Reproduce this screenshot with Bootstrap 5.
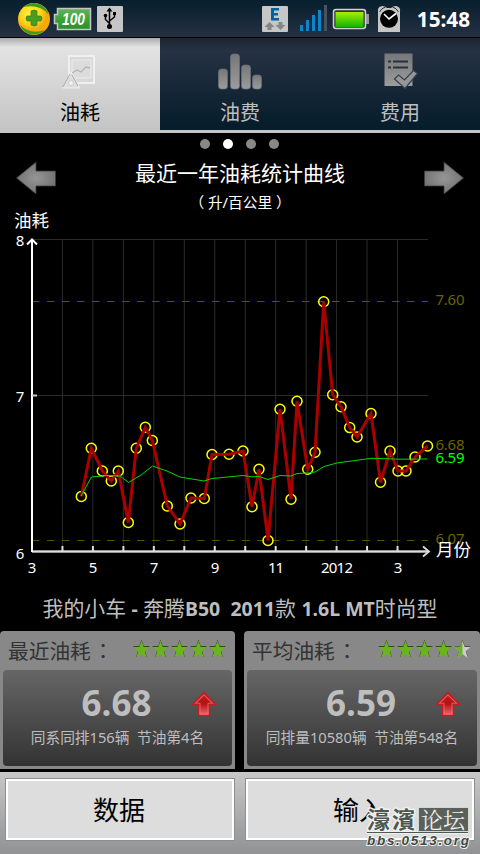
<!DOCTYPE html>
<html lang="zh-CN">
<head>
    <meta charset="UTF-8">
    <meta name="viewport" content="width=device-width, initial-scale=1.0">
    <title>油耗</title>
    <link href="https://cdn.jsdelivr.net/npm/bootstrap@5.3.0/dist/css/bootstrap.min.css" rel="stylesheet">
    <style>
        body {
            background: #000;
            color: #fff;
            font-family: "Noto Sans", "Noto Sans CJK SC", sans-serif;
            overflow: hidden;
        }
        svg { display: block; flex: none; }
        .app { width: 480px; height: 854px; }
        .status-bar {
            height: 38px;
            border-bottom: 1px solid #000;
            background: linear-gradient(#061f2e, #263042);
            padding: 0 10px 0 17px;
        }
        .clock { font-size: 20.7px; line-height: 38px; font-weight: 700; margin-left: 15px; padding-top: 1px; }
        .tabs {
            height: 95px;
            background: linear-gradient(#1d242f, #263144 12px, #051c2a 92px, #c4c4c4 92px);
        }
        .tab-item { color: #bebebe; font-size: 20px; line-height: 28px; padding-top: 14px; }
        .tab-item.active { color: #000; background: linear-gradient(#a9a9a9, #e3e3e3 9px, #c4c4c4 92px); }
        .tab-item svg { margin-bottom: 7px; }
        .dots { height: 22px; gap: 13px; padding-right: 2px; }
        .dot { width: 10px; height: 10px; border-radius: 50%; background: #888; }
        .dot.on { background: #fff; }
        .chart-head { height: 57px; padding: 0 15px; }
        .chart-title { font-size: 21px; line-height: 34px; }
        .chart-unit { font-size: 14.7px; line-height: 26px; }
        .car-name { height: 51px; padding-top: 3px; font-size: 20.9px; line-height: 50px; color: #bebebe; white-space: pre; }
        .car-name b { font-size: 19.5px; }
        .stats { height: 138px; gap: 9px; }
        .stat-box { background: #888; border-radius: 4px 4px 0 0; padding: 0 3px 3px; }
        .stat-head { height: 39px; padding: 0 4px 0 5px; color: #333; font-size: 20.7px; line-height: 38px; }
        .colon { font-family: "Noto Sans CJK TC", sans-serif; margin-left: 2px; }
        .stat-body {
            height: 96px;
            border-radius: 4px;
            background: linear-gradient(#666, #333);
            color: #bebebe;
            padding-top: 9px;
        }
        .stat-value { font-size: 35px; line-height: 48px; font-weight: 700; padding-right: 2px; }
        .stat-note { font-size: 14.7px; line-height: 21px; white-space: pre; }
        .trend { right: 15px; top: 21px; }
        .stat-box + .stat-box .trend { right: 16px; }
        .actions {
            height: 82px;
            margin-top: 3px;
            padding: 6px 5px 0;
            gap: 10px;
            background: linear-gradient(#c8c8c8, #909294);
        }
        .action-btn {
            height: 63px;
            border: 1px solid #8e8e8e;
            border-radius: 0;
            box-shadow: inset 0 0 0 2px #fff;
            background: #ddd;
            color: #000;
            font-size: 26px;
            line-height: 61px;
            padding: 1px 2px 0 0;
        }
        .forum-mark { right: 6px; bottom: 1px; }
        .cjk { font-family: "Noto Sans CJK SC", sans-serif; }
    </style>
</head>
<body>
<div class="app d-flex flex-column">
    <!-- 状态栏 -->
    <div class="status-bar d-flex align-items-center">
        <svg width="110" height="38" viewBox="17 0 110 38">
            <defs>
                <radialGradient id="ball" cx=".4" cy=".35"><stop offset="0" stop-color="#fff34a"/><stop offset=".6" stop-color="#ffd91a"/><stop offset="1" stop-color="#f5a90b"/></radialGradient>
                <linearGradient id="cell" x2="0" y2="1"><stop offset="0" stop-color="#62b45f"/><stop offset=".5" stop-color="#3ca33c"/><stop offset="1" stop-color="#239323"/></linearGradient>
            </defs>
            <circle cx="34" cy="19" r="16" fill="url(#ball)"/>
            <path d="M23 7Q34-1 44 7Q49 12 48 14Q40 4 23 7ZM20 25Q30 35 45 30Q38 36 29 34Q22 31 20 25Z" fill="#3f9a23"/>
            <path d="M31 11q3-2 6 0v5h4q2 2 0 5h-4v4q-3 2-6 0v-4h-4q-2-3 0-5h4z" fill="#4a9d1e" stroke="#2f7d1c" stroke-width=".7"/>
            <path d="M57.500 8.500h33v21h-33v-6h-3v-9h3z" fill="url(#cell)" stroke="#c6c6c6" stroke-width="1.500"/>
            <text x="62" y="25" font-family="Liberation Sans" font-size="17" font-style="italic" font-weight="700" fill="#fff" textLength="23" lengthAdjust="spacingAndGlyphs">100</text>
            <rect x="97" y="6" width="26" height="26" rx="1" fill="#c6c6c6"/>
            <g fill="none" stroke="#000" stroke-width="1.500"><path d="M109.500 26V9M109.500 23.500L105.500 19.500V16M109.500 21L114.500 17V14"/></g>
            <path d="M109.500 7.500l3 4h-6z"/><circle cx="109.500" cy="26.500" r="2.500"/><circle cx="105.500" cy="15.500" r="1.800"/><path d="M113 12h3v3h-3z"/>
        </svg>
        <svg class="ms-auto" width="142" height="38" viewBox="260 0 142 38">
            <defs><linearGradient id="juice" x2="0" y2="1"><stop offset="0" stop-color="#a4f000"/><stop offset="1" stop-color="#12b400"/></linearGradient></defs>
            <rect x="262" y="6" width="26" height="26" rx="1" fill="#c6c6c6"/>
            <path d="M271 8h8v2.500h-5V13h4v2.500h-4V18h5v2.500h-8z" fill="#00629f"/>
            <path d="M269.500 22l5 5h-3v3h-4v-3h-3zM280.500 30l5-5h-3v-3h-4v3h-3z" fill="#858585"/>
            <path d="M300 25h3v6h-3zM306 20h3v11h-3zM312 15h3v16h-3zM318 10h3v21h-3z" fill="#0a86cc"/>
            <path d="M324 5h3v26h-3z" fill="#4a525e"/>
            <rect x="366" y="14" width="3" height="10" fill="#969696"/>
            <rect x="333.500" y="9.500" width="32" height="19" rx="2.500" fill="#333" stroke="#d0d0d0" stroke-width="1.500"/>
            <rect x="335.500" y="12" width="28" height="15" fill="url(#juice)"/>
            <path d="M378 12q-1-5 4-6q3 0 5 2h4q2-2 5-2q5 1 4 6v20h-22z" fill="#c6c6c6"/>
            <path d="M379.500 12q2-4 6-5M398.500 12q-2-4-6-5" fill="none" stroke="#333" stroke-width="1"/>
            <circle cx="389" cy="18.800" r="9" fill="#000"/>
            <path d="M384 14l5 5 7-5.500" fill="none" stroke="#fff" stroke-width="1.600"/>
        </svg>
        <span class="clock">15:48</span>
    </div>

    <!-- 标签页 -->
    <div class="tabs d-flex">
        <div class="tab-item active col-4 d-flex flex-column align-items-center">
            <svg width="36" height="40" viewBox="62 52 36 40">
                <rect x="69" y="56" width="25" height="27" fill="#d8d8d8" stroke="#f0f0f0" stroke-width="2"/>
                <path d="M72 60h19v18H72z" fill="#dcdcdc" stroke="#ececec"/>
                <path d="M72 73l5-3 4 2 5-5 4 1" fill="none" stroke="#b5b5b5" stroke-width="1.300"/>
                <path d="M71 72l-8 16h17z" fill="#dedede" stroke="#eee"/>
                <path d="M70 74l-7 13M72 75l6 11" stroke="#aaa" fill="none"/>
                <circle cx="71" cy="83" r="2.500" fill="#f1f1f1" stroke="#bbb" stroke-width=".6"/>
            </svg>
            <span>油耗</span>
        </div>
        <div class="tab-item col-4 d-flex flex-column align-items-center">
            <svg width="48" height="40" viewBox="216 52 48 40">
                <defs><linearGradient id="metal" x2="0" y2="1"><stop offset="0" stop-color="#777"/><stop offset="1" stop-color="#9c9c9c"/></linearGradient></defs>
                <g fill="url(#metal)" stroke="#6e747b" stroke-width=".6"><rect x="218.500" y="69" width="9" height="20" rx="3"/><rect x="230.500" y="54" width="9" height="35" rx="3"/><rect x="241.500" y="65" width="9" height="24" rx="3"/><rect x="252.500" y="75" width="9" height="14" rx="3"/></g>
            </svg>
            <span>油费</span>
        </div>
        <div class="tab-item col-4 d-flex flex-column align-items-center">
            <svg width="38" height="40" viewBox="381 52 38 40">
                <path d="M384.500 53.500h28V86h-28z" fill="url(#metal)"/>
                <path d="M388 61.500h3M393 61.500h15M388 67.500h3M393 67.500h15" stroke="#27313f" stroke-width="1.800"/>
                <path d="M394.500 79l4-4 6 5 9-9.500 4 3-12.500 15z" fill="#969696" stroke="#34404d" stroke-width="1.200"/>
            </svg>
            <span>费用</span>
        </div>
    </div>

    <!-- 曲线标题 -->
    <div class="dots d-flex justify-content-center align-items-center">
        <span class="dot"></span><span class="dot on"></span><span class="dot"></span><span class="dot"></span>
    </div>
    <div class="chart-head d-flex justify-content-between">
        <svg width="42" height="46" viewBox="0 0 42 46">
            <defs><radialGradient id="arrow"><stop offset="0" stop-color="#969696"/><stop offset="1" stop-color="#747474"/></radialGradient></defs>
            <path d="M1.500 23L21 7v9h19.500v15H21v8z" fill="url(#arrow)" stroke="#3a3a3a" stroke-width=".8"/>
        </svg>
        <div class="text-center">
            <div class="chart-title cjk">最近一年油耗统计曲线</div>
            <div class="chart-unit">（ 升/百公里 ）</div>
        </div>
        <svg width="42" height="46" viewBox="0 0 42 46"><path d="M40.500 23L21 7v9H1.500v15H21v8z" fill="url(#arrow)" stroke="#3a3a3a" stroke-width=".8"/></svg>
    </div>

    <!-- 油耗曲线 -->
    <svg id="chart" class="overflow-visible" width="480" height="368" viewBox="0 212 480 368" font-size="15" fill="#fff">
        <text x="14" y="227" font-size="17.500">油耗</text>
        <g id="grid" stroke="#2b2b2b" stroke-width="1" fill="none"></g>
        <path d="M32 301.500H428M32 540.500H428" stroke="#555500" stroke-width="1" stroke-dasharray="7.500 7.500"/>
        <g fill="#6a6400">
            <text x="435.500" y="305" textLength="29">7.60</text>
            <text x="435.500" y="450" textLength="29">6.68</text>
            <text x="435.500" y="544" textLength="29">6.07</text>
        </g>
        <text x="435.500" y="463" textLength="29" fill="#0f0">6.59</text>
        <path d="M32 551.500H429" stroke="#999" stroke-width="3"/>
        <path d="M32 551.500H429" stroke="#ddd" stroke-width="1"/>
        <path d="M423 546.500l6 5-6 5" fill="none" stroke="#ddd" stroke-width="1.800"/>
        <path d="M32 552V240" stroke="#fff" stroke-width="2"/>
        <path d="M27 244.500l5-5 5 5" fill="none" stroke="#fff" stroke-width="2"/>
        <path d="M32 395.500h5" stroke="#ccc" stroke-width="2"/>
        <g id="ticks" stroke="#ddd" stroke-width="2"></g>
        <g id="rings" fill="none" stroke="#ff0" stroke-width="1.500"></g>
        <polyline id="fuel" fill="none" stroke="#aa0000" stroke-width="3"/>
        <polyline id="avg" fill="none" stroke="#00d800" stroke-width="1"/>
        <g text-anchor="middle">
            <text x="20" y="246">8</text>
            <text x="20" y="402">7</text>
            <text x="20" y="559">6</text>
            <text x="32" y="573">3</text>
            <text x="93" y="573">5</text>
            <text x="154" y="573">7</text>
            <text x="215" y="573">9</text>
            <text x="276" y="573" textLength="16">11</text>
            <text x="337" y="573" textLength="32">2012</text>
            <text x="398" y="573">3</text>
        </g>
        <text x="436" y="556" font-size="17.500">月份</text>
    </svg>

    <div class="car-name text-center">我的小车 <b>-</b> 奔腾<b>B50  2011</b>款 <b>1.6L MT</b>时尚型</div>

    <!-- 统计 -->
    <div class="stats d-flex">
        <div class="stat-box" style="width: 235px">
            <div class="stat-head d-flex justify-content-between">
                <span>最近油耗<span class="colon" lang="zh-TW">：</span></span>
                <svg class="stars" data-score="5" width="96" height="39"></svg>
            </div>
            <div class="stat-body position-relative text-center">
                <div class="stat-value">6.68</div>
                <div class="stat-note">同系同排156辆  节油第4名</div>
                <svg class="trend position-absolute" width="26" height="26" viewBox="0 0 26 26">
                    <defs><linearGradient id="up" x2="0" y2="1"><stop offset="0" stop-color="#c21c1c"/><stop offset=".5" stop-color="#b41414"/><stop offset="1" stop-color="#f06a74"/></linearGradient></defs>
                    <path d="M13 1.500L24.500 13.500H18.500V24.500H7.500V13.500H1.500Z" fill="url(#up)" stroke="#c51c22" stroke-width="1.500"/>
                    <path d="M13 3.800L21.500 12.300H17V23H9V12.300H4.500Z" fill="none" stroke="#f0737a" stroke-opacity=".7" stroke-width="1.100"/>
                </svg>
            </div>
        </div>
        <div class="stat-box" style="width: 236px">
            <div class="stat-head d-flex justify-content-between">
                <span>平均油耗<span class="colon" lang="zh-TW">：</span></span>
                <svg class="stars" data-score="4.5" width="96" height="39"></svg>
            </div>
            <div class="stat-body position-relative text-center">
                <div class="stat-value">6.59</div>
                <div class="stat-note">同排量10580辆  节油第548名</div>
                <svg class="trend position-absolute" width="26" height="26" viewBox="0 0 26 26">
                    <path d="M13 1.500L24.500 13.500H18.500V24.500H7.500V13.500H1.500Z" fill="url(#up)" stroke="#c51c22" stroke-width="1.500"/>
                    <path d="M13 3.800L21.500 12.300H17V23H9V12.300H4.500Z" fill="none" stroke="#f0737a" stroke-opacity=".7" stroke-width="1.100"/>
                </svg>
            </div>
        </div>
    </div>

    <!-- 操作按钮 -->
    <div class="actions d-flex position-relative">
        <button type="button" class="btn action-btn flex-fill w-50">数据</button>
        <button type="button" class="btn action-btn flex-fill w-50">输入</button>
        <svg class="forum-mark position-absolute overflow-visible" width="112" height="54" viewBox="362 799 112 54">
            <g stroke="#f0f0f0" stroke-width="3" stroke-linejoin="round" fill="none">
                <text x="367" y="828" font-family="Noto Sans CJK TC" font-size="23" font-weight="700" fill="#4d5850" paint-order="stroke" textLength="48">濠濱</text>
                <path d="M367 832.500H468"/>
            </g>
            <rect x="418.500" y="807.500" width="50" height="24" fill="#59615a" stroke="#d4d8d4"/>
            <text x="421" y="828" font-family="Noto Serif CJK SC, Noto Sans CJK SC" font-size="22" fill="#f0f0f0" textLength="44">论坛</text>
            <path d="M367 832.500H468" stroke="#4d5850" stroke-width="1"/>
            <text x="367" y="845" font-family="Liberation Sans" font-size="13.500" font-weight="700" font-style="italic" fill="#3f4942" stroke="#f0f0f0" stroke-width="2" paint-order="stroke" textLength="102">bbs.0513.org</text>
        </svg>
    </div>
</div>

<script src="https://cdn.jsdelivr.net/npm/bootstrap@5.3.0/dist/js/bootstrap.bundle.min.js"></script>
<script>
    const fuel = [
        [81.3, 496.5], [91.3, 448.3], [102.3, 471], [111.3, 481], [118.3, 471], [128.3, 522.5],
        [136.3, 448.3], [145.3, 427.3], [152.3, 440.5], [167.3, 506], [180, 524], [191, 498],
        [204.3, 498.5], [212, 454.5], [229, 454.3], [243, 451], [252, 506.7], [259, 469.3],
        [268, 540.5], [280, 409.3], [291, 499.2], [297, 401.3], [307.7, 469.3], [315, 452.3],
        [323.7, 301.8], [332.7, 394.8], [341, 406.7], [349.7, 427.6], [357, 437], [371, 413.5],
        [380.5, 482.3], [390, 451], [398, 471], [406, 471], [415, 457], [427.5, 446]
    ];
    const avg = [
        [81, 496], [91.5, 477], [106, 475.5], [120, 476], [128.5, 482.5], [141, 475], [152.5, 466],
        [167, 471], [180, 477], [204, 481], [212, 478.5], [243, 475.5], [252, 476.8], [259, 476.5],
        [268, 479.5], [280, 475.5], [291, 476], [297, 473.5], [308, 473], [315, 472], [324, 466.5],
        [337, 463], [355, 460.5], [371, 458.3], [380, 458.5], [400, 459.2], [427, 459]
    ];
    document.getElementById('fuel').setAttribute('points', fuel.join(' '));
    document.getElementById('avg').setAttribute('points', avg.join(' '));
    document.getElementById('rings').innerHTML = fuel.map(p => `<circle cx="${p[0]}" cy="${p[1]}" r="5"/>`).join('');

    // 网格和刻度
    let grid = '<path d="M32 239.500H428M32 395.500H428"/>';
    let ticks = '';
    for (let i = 1; i <= 12; i++) {
        const x = 32 + i * 30.46;
        grid += `<path d="M${x} 239V551"/>`;
        ticks += `<path d="M${x} 546v5"/>`;
    }
    document.getElementById('grid').innerHTML = grid;
    document.getElementById('ticks').innerHTML = ticks;

    // 星级
    const star = 'M8.500 0L10.600 6.300H17L11.800 10.500L13.800 17.500L8.500 13.400L3.200 17.500L5.200 10.500L0 6.300H6.400Z';
    const half = 'M8.500 0V13.400L3.200 17.500L5.200 10.500L0 6.300H6.400Z';
    document.querySelectorAll('.stars').forEach(el => {
        const score = Number(el.dataset.score);
        let html = '';
        for (let i = 0; i < 5; i++) {
            const full = score >= i + 1;
            html += `<g transform="translate(${i * 19 + 1} 9.500)">
                <path d="${star}" fill="#222" transform="translate(0 -.8)"/>
                <path d="${star}" fill="${full ? '#6ab51c' : '#ccc'}"/>
                ${full ? '' : `<path d="${half}" fill="#6ab51c"/>`}</g>`;
        }
        el.innerHTML = html;
    });
</script>
</body>
</html>
